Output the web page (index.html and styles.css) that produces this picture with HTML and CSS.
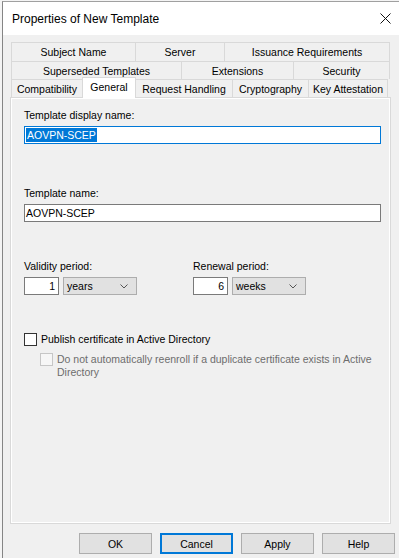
FILE: index.html
```html
<!DOCTYPE html>
<html>
<head>
<meta charset="utf-8">
<link rel="stylesheet" href="styles.css">
</head>
<body>
<div class="dialog">
  <div class="titlebar">
    <span class="title">Properties of New Template</span>
    <svg class="close" width="11" height="11" viewBox="0 0 11 11"><path d="M0.5 0.5 L10.5 10.5 M10.5 0.5 L0.5 10.5" stroke="#111" stroke-width="1" fill="none"/></svg>
  </div>
  <div class="body">
    <div class="tabs">
      <div class="tabrow r1">
        <div class="tab" style="width:124px">Subject Name</div>
        <div class="tab" style="width:89px">Server</div>
        <div class="tab last" style="width:166px">Issuance Requirements</div>
      </div>
      <div class="tabrow r2">
        <div class="tab" style="width:170px">Superseded Templates</div>
        <div class="tab" style="width:112px">Extensions</div>
        <div class="tab last" style="width:97px">Security</div>
      </div>
      <div class="tabrow r3">
        <div class="tab" style="width:71px">Compatibility</div>
        <div class="tab selected" style="width:54px">General</div>
        <div class="tab noleft" style="width:96px">Request Handling</div>
        <div class="tab" style="width:76px">Cryptography</div>
        <div class="tab last" style="width:80px">Key Attestation</div>
      </div>
    </div>
    <div class="panel">
      <div class="page">
        <div class="label">Template display name:</div>
        <div class="field focused"><span class="sel">AOVPN-SCEP</span></div>
        <div class="label l2">Template name:</div>
        <div class="field">AOVPN-SCEP</div>
        <div class="periods">
          <div class="period">
            <div class="label">Validity period:</div>
            <div class="pairs">
              <div class="num">1</div>
              <div class="combo"><span>years</span><svg width="8" height="5" viewBox="0 0 8 5"><path d="M0.5 0.5 L4 4 L7.5 0.5" stroke="#555" fill="none"/></svg></div>
            </div>
          </div>
          <div class="period">
            <div class="label">Renewal period:</div>
            <div class="pairs">
              <div class="num">6</div>
              <div class="combo"><span>weeks</span><svg width="8" height="5" viewBox="0 0 8 5"><path d="M0.5 0.5 L4 4 L7.5 0.5" stroke="#555" fill="none"/></svg></div>
            </div>
          </div>
        </div>
        <div class="check">
          <span class="box"></span>
          <span class="ctext">Publish certificate in Active Directory</span>
        </div>
        <div class="check sub disabled">
          <span class="box"></span>
          <span class="ctext">Do not automatically reenroll if a duplicate certificate exists in Active Directory</span>
        </div>
      </div>
    </div>
    <div class="buttons">
      <div class="btn">OK</div>
      <div class="btn default">Cancel</div>
      <div class="btn">Apply</div>
      <div class="btn">Help</div>
    </div>
  </div>
</div>
</body>
</html>
```
FILE: styles.css
```css
html, body {
  margin: 0;
  padding: 0;
}
body {
  background: #f4f4f4;
  width: 399px;
  height: 558px;
  overflow: hidden;
  font-family: "Liberation Sans", Arial, sans-serif;
  font-size: 10.5px;
  color: #000;
}
.dialog {
  margin: 1px 0 0 2px;
  border-left: 1px solid #858585;
  border-top: 1px solid #a0a0a0;
  width: 396px;
  height: 556px;
  background: #f0f0f0;
  display: flex;
  flex-direction: column;
}
.titlebar {
  height: 33px;
  background: #fff;
  display: flex;
  align-items: center;
  justify-content: space-between;
  padding: 0 8px 0 9px;
  flex: none;
}
.title {
  font-size: 12px;
  margin-top: 1px;
}
.body {
  padding: 7px 0 0 7px;
  display: flex;
  flex-direction: column;
}
.tabs {
  margin-left: 1px;
  width: 379px;
}
.tabrow {
  display: flex;
}
.tab {
  box-sizing: border-box;
  border-top: 1px solid #d9d9d9;
  border-left: 1px solid #d9d9d9;
  background: #f0f0f0;
  display: flex;
  align-items: center;
  justify-content: center;
  white-space: nowrap;
  flex: none;
}
.tab.last {
  border-right: 1px solid #d9d9d9;
}
.tab.noleft {
  border-left: none;
}
.r1 .tab { height: 19px; }
.r2 .tab { height: 18px; }
.r3 .tab { height: 18px; }
.tab.selected {
  position: relative;
  z-index: 1;
  background: #fff;
  height: 21px;
  margin-top: -2px;
  margin-bottom: -1px;
  border-right: 1px solid #d9d9d9;
  align-items: flex-start;
  padding-top: 3px;
}
.panel {
  box-sizing: border-box;
  width: 381px;
  height: 427px;
  border: 1px solid #d9d9d9;
  background: #fff;
  padding: 1px;
}
.page {
  background: #f0f0f0;
  height: 100%;
  box-sizing: border-box;
  padding: 10px 8px 0 12px;
  display: flex;
  flex-direction: column;
}
.label {
  line-height: 13px;
  height: 13px;
}
.l2 {
  margin-top: 43px;
}
.field {
  box-sizing: border-box;
  margin-top: 4px;
  width: 357px;
  height: 18px;
  border: 1px solid #7a7a7a;
  background: #fff;
  line-height: 16px;
  padding-left: 1px;
}
.field.focused {
  border-color: #0078d7;
}
.sel {
  background: #0078d7;
  color: #fff;
  padding: 0 1px;
  display: inline-block;
  line-height: 14px;
  vertical-align: top;
  margin-top: 1px;
}
.periods {
  margin-top: 38px;
  display: grid;
  grid-template-columns: 169px auto;
}
.pairs {
  margin-top: 4px;
  display: flex;
  gap: 4px;
}
.num {
  box-sizing: border-box;
  width: 35px;
  height: 18px;
  border: 1px solid #7a7a7a;
  background: #fff;
  text-align: right;
  padding-right: 3px;
  line-height: 16px;
}
.combo {
  box-sizing: border-box;
  width: 74px;
  height: 18px;
  border: 1px solid #adadad;
  background: #e1e1e1;
  display: flex;
  align-items: center;
  justify-content: space-between;
  padding: 0 8px 0 3px;
  line-height: 16px;
}
.check {
  display: flex;
  align-items: flex-start;
  gap: 4px;
  margin-top: 38px;
  line-height: 13px;
}
.box {
  box-sizing: border-box;
  width: 13px;
  height: 13px;
  border: 1px solid #333;
  background: #fff;
  flex: none;
}
.check.sub {
  margin-top: 7px;
  margin-left: 16px;
}
.check.sub .ctext {
  width: 322px;
}
.disabled {
  color: #6d6d6d;
}
.disabled .box {
  border-color: #c6c6c6;
  background: #f6f6f6;
}
.buttons {
  margin-top: 9px;
  display: flex;
  justify-content: flex-end;
  gap: 8px;
  width: 385px;
}
.btn {
  box-sizing: border-box;
  width: 73px;
  height: 21px;
  border: 1px solid #adadad;
  background: #e1e1e1;
  display: flex;
  align-items: center;
  justify-content: center;
}
.btn.default {
  border: 2px solid #0078d7;
}
```
